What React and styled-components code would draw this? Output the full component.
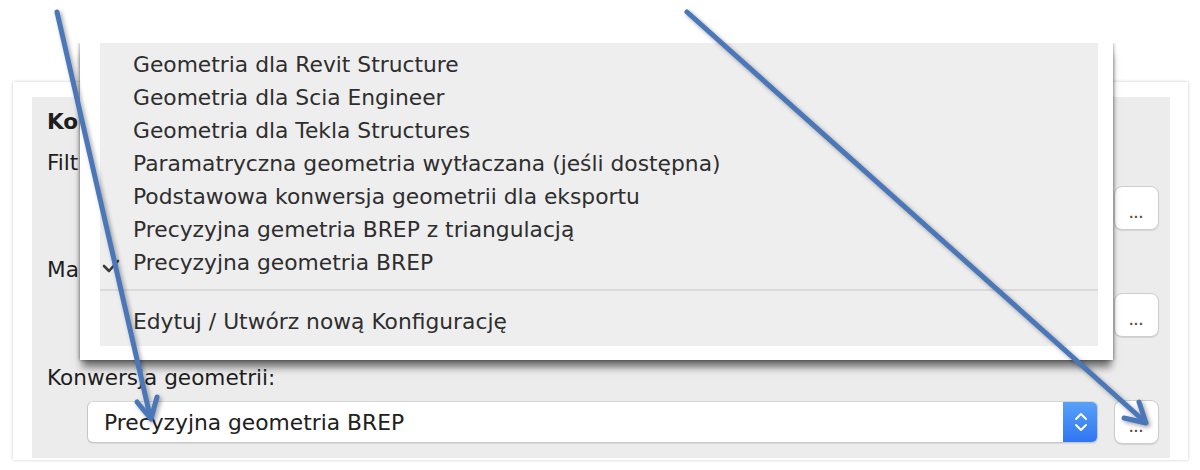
import React from "react";
import styled, { createGlobalStyle } from "styled-components";

const Global = createGlobalStyle`
  * { box-sizing: border-box; }
  body {
    margin: 0;
    background: #ffffff;
    font-family: "DejaVu Sans", "Liberation Sans", sans-serif;
  }
`;

const Page = styled.div`
  position: relative;
  width: 1200px;
  height: 470px;
  overflow: hidden;
  background: #ffffff;
  padding: 82px 0 0 13px;
`;

const Frame = styled.div`
  width: 1175px;
  height: 378px;
  background: #ffffff;
  box-shadow: 0 0 3px rgba(0, 0, 0, 0.22);
  padding: 15px 18px 2px 19px;
`;

const Panel = styled.div`
  height: 100%;
  background: #ececec;
  padding: 0 11px 0 15px;
  display: flex;
  flex-direction: column;
`;

const Label = styled.div`
  margin-top: ${(p) => p.$top}px;
  height: 22px;
  line-height: 22px;
  font-size: 21.6px;
  font-weight: ${(p) => (p.$bold ? 700 : 400)};
  color: #1e1e1e;
  white-space: nowrap;
`;

const FieldRow = styled.div`
  margin-top: ${(p) => p.$top}px;
  height: 44px;
  display: flex;
  align-items: center;
  gap: 16px;
  padding-left: 40px;
`;

const Select = styled.div`
  flex: 1;
  height: 42px;
  display: flex;
  align-items: center;
  background: #ffffff;
  border: 1px solid #c6c6c6;
  border-top-color: #d6d6d6;
  border-radius: 6px;
  box-shadow: 0 1px 1px rgba(0, 0, 0, 0.08);
  overflow: hidden;
`;

const SelectText = styled.div`
  flex: 1;
  padding-left: 16px;
  font-size: 21.8px;
  color: #202020;
  white-space: nowrap;
`;

const Stepper = styled.div`
  width: 35px;
  align-self: stretch;
  margin: -1px -1px -1px 0;
  background: linear-gradient(#59a2fa, #2f74f2);
  border-radius: 0 6px 6px 0;
  display: flex;
  align-items: center;
  justify-content: center;
`;

const DotsButton = styled.div`
  width: 45px;
  height: 44px;
  flex: none;
  background: #ffffff;
  border: 1px solid #cdcdcd;
  border-radius: 8px;
  box-shadow: 0 1px 1px rgba(0, 0, 0, 0.1);
  display: flex;
  justify-content: center;
  align-items: flex-end;
  padding-bottom: 11px;
  font-family: "Liberation Sans", sans-serif;
  font-size: 14px;
  font-weight: 700;
  line-height: 10px;
  letter-spacing: 1px;
  color: #5a4c3e;
`;

const Menu = styled.div`
  position: absolute;
  left: 80px;
  top: 43px;
  width: 1033px;
  height: 317px;
  background: #ffffff;
  padding: 0 15px 14px 20px;
  box-shadow: -1px 0 3px rgba(0, 0, 0, 0.25), 1px 0 3px rgba(0, 0, 0, 0.25),
    0 9px 8px -2px rgba(0, 0, 0, 0.55);
  clip-path: inset(0 -20px -40px -20px);
`;

const MenuBody = styled.div`
  height: 100%;
  background: #eeeeee;
  padding-top: 5px;
  display: flex;
  flex-direction: column;
`;

const MenuItem = styled.div`
  height: 33px;
  display: flex;
  align-items: center;
  font-size: 21.8px;
  color: #2e2e2e;
  white-space: nowrap;
`;

const CheckCol = styled.div`
  width: 33px;
  flex: none;
  display: flex;
  align-items: center;
  padding-left: 2px;
  padding-top: 6px;
`;

const Separator = styled.div`
  height: 2px;
  background: #dadada;
  margin: 10px 0 14px;
`;

const Overlay = styled.svg`
  position: absolute;
  left: 0;
  top: 0;
  pointer-events: none;
  filter: drop-shadow(2px 2px 2px rgba(0, 0, 0, 0.35));
`;

const items = [
  "Geometria dla Revit Structure",
  "Geometria dla Scia Engineer",
  "Geometria dla Tekla Structures",
  "Paramatryczna geometria wytłaczana (jeśli dostępna)",
  "Podstawowa konwersja geometrii dla eksportu",
  "Precyzyjna gemetria BREP z triangulacją",
  "Precyzyjna geometria BREP",
];

function Field({ top, value }) {
  return (
    <FieldRow $top={top}>
      <Select>
        <SelectText>{value}</SelectText>
        <Stepper>
          <svg width="14" height="26" viewBox="0 0 14 26">
            <path d="M2 10 L7 5 L12 10" fill="none" stroke="#fff" strokeWidth="2" strokeLinecap="round" strokeLinejoin="round" />
            <path d="M2 16 L7 21 L12 16" fill="none" stroke="#fff" strokeWidth="2" strokeLinecap="round" strokeLinejoin="round" />
          </svg>
        </Stepper>
      </Select>
      <DotsButton>...</DotsButton>
    </FieldRow>
  );
}

export default function App() {
  return (
    <>
      <Global />
      <Page>
        <Frame>
          <Panel>
            <Label $top={14} $bold>Konfiguracja</Label>
            <Label $top={19}>Filtr:</Label>
            <Field top={12} value="" />
            <Label $top={29}>Mapowanie:</Label>
            <Field top={12} value="" />
            <Label $top={30}>Konwersja geometrii:</Label>
            <Field top={11} value="Precyzyjna geometria BREP" />
          </Panel>
        </Frame>

        <Menu>
          <MenuBody>
            {items.map((t, i) => (
              <MenuItem key={t}>
                <CheckCol>
                  {i === items.length - 1 && (
                    <svg width="18" height="14" viewBox="0 0 18 14">
                      <path d="M2 7 L7 12 L16 2" fill="none" stroke="#3a3a3a" strokeWidth="2.6" strokeLinecap="round" strokeLinejoin="round" />
                    </svg>
                  )}
                </CheckCol>
                {t}
              </MenuItem>
            ))}
            <Separator />
            <MenuItem>
              <CheckCol />
              Edytuj / Utwórz nową Konfigurację
            </MenuItem>
          </MenuBody>
        </Menu>

        <Overlay width="1200" height="470" viewBox="0 0 1200 470">
          <g fill="none" stroke="#4a77b9" strokeWidth="5" strokeLinecap="round" strokeLinejoin="round">
            <line x1="57" y1="12" x2="150" y2="416" />
            <polyline points="137,402 151,419 157,397" />
            <line x1="687" y1="12" x2="1144" y2="421" />
            <polyline points="1139,402 1146,423 1124,418" />
          </g>
        </Overlay>
      </Page>
    </>
  );
}
